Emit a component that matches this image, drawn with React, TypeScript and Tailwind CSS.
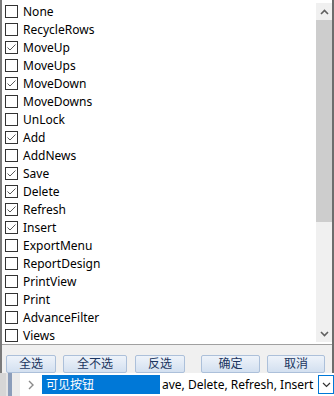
import React from 'react';

const items: [string, boolean][] = [
  ['None', false],
  ['RecycleRows', false],
  ['MoveUp', true],
  ['MoveUps', false],
  ['MoveDown', true],
  ['MoveDowns', false],
  ['UnLock', false],
  ['Add', true],
  ['AddNews', false],
  ['Save', true],
  ['Delete', true],
  ['Refresh', true],
  ['Insert', true],
  ['ExportMenu', false],
  ['ReportDesign', false],
  ['PrintView', false],
  ['Print', false],
  ['AdvanceFilter', false],
  ['Views', false],
];

const font = { fontFamily: '"Noto Sans", "Noto Sans CJK SC", sans-serif' };

function CheckRow({ label, checked }: { label: string; checked: boolean }) {
  return (
    <div className="flex h-[18px] items-center">
      <div className="ml-[3px] flex h-[13px] w-[13px] items-center justify-center border border-[#333333] bg-white">
        {checked && (
          <svg width="11" height="11" viewBox="0 0 11 11">
            <path d="M1.5 5.5 L4 8 L9.5 2.5" fill="none" stroke="#5a5a5a" strokeWidth="1" />
          </svg>
        )}
      </div>
      <span className="ml-[5px] pt-[1px] text-[12px] leading-none text-black">{label}</span>
    </div>
  );
}

function Btn({ label, w }: { label: string; w: string }) {
  return (
    <button
      className={`${w} h-[18px] rounded-[2px] border border-[#acc0da] bg-gradient-to-b from-[#eef3fa] to-[#d3e0f0] text-[12px] leading-none text-[#1a3560]`}
    >
      {label}
    </button>
  );
}

export default function App() {
  return (
    <div className="flex h-[396px] w-[334px] flex-col bg-white" style={font}>
      {/* editor panel */}
      <div className="flex h-[373px] flex-col border-x-2 border-l-[#7a7a7a] border-r-[#6d6d6d]">
        <div className="flex h-[347px] border-b border-[#a0a0a0] bg-white">
          <div className="flex-1 pt-[2px]">
            {items.map(([label, checked]) => (
              <CheckRow key={label} label={label} checked={checked} />
            ))}
          </div>
          <div className="mt-[3px] mb-[2px] flex w-[16px] flex-col bg-[#f0f0f0]">
            <div className="flex h-[17px] items-center justify-center">
              <svg width="9" height="6" viewBox="0 0 9 6">
                <path d="M1 5 L4.5 1.5 L8 5" fill="none" stroke="#606060" strokeWidth="1.6" />
              </svg>
            </div>
            <div className="h-[202px] bg-[#cdcdcd]" />
            <div className="flex-1" />
            <div className="flex h-[17px] items-center justify-center">
              <svg width="9" height="6" viewBox="0 0 9 6">
                <path d="M1 1 L4.5 4.5 L8 1" fill="none" stroke="#606060" strokeWidth="1.6" />
              </svg>
            </div>
          </div>
        </div>
        <div className="flex flex-1 items-start bg-[#f0f0f0] pt-[5px]">
          <div className="ml-[4px]"><Btn label="全选" w="w-[50px]" /></div>
          <div className="ml-[7px]"><Btn label="全不选" w="w-[64px]" /></div>
          <div className="ml-[8px]"><Btn label="反选" w="w-[50px]" /></div>
          <div className="ml-[16px]"><Btn label="确定" w="w-[59px]" /></div>
          <div className="ml-[7px]"><Btn label="取消" w="w-[58px]" /></div>
        </div>
      </div>
      {/* property grid row */}
      <div className="flex flex-1 items-stretch bg-white">
        <div className="w-[6px] bg-[#d6d6d6]" />
        <div className="w-[2px] bg-[#e4e4e4]" />
        <div className="w-[4px] bg-[#8b9dba]" />
        <div className="w-[8px] bg-[#ececec]" />
        <div className="flex w-[22px] items-center justify-center">
          <svg width="6" height="10" viewBox="0 0 6 10">
            <path d="M1 1 L5 5 L1 9" fill="none" stroke="#8a8a8a" strokeWidth="1.4" />
          </svg>
        </div>
        <div className="my-[2px] flex w-[118px] items-center bg-[#0078d7] pl-[4px] text-[12px] text-white">
          可见按钮
        </div>
        <div className="flex flex-1 items-center overflow-hidden whitespace-nowrap pl-[2px] text-[12px] text-black">
          ave, Delete, Refresh, Insert
        </div>
        <div className="my-[2px] flex w-[16px] items-center justify-center border border-[#0078d7] bg-white">
          <svg width="9" height="6" viewBox="0 0 9 6">
            <path d="M1 1 L4.5 4.5 L8 1" fill="none" stroke="#333333" strokeWidth="1.2" />
          </svg>
        </div>
      </div>
    </div>
  );
}
